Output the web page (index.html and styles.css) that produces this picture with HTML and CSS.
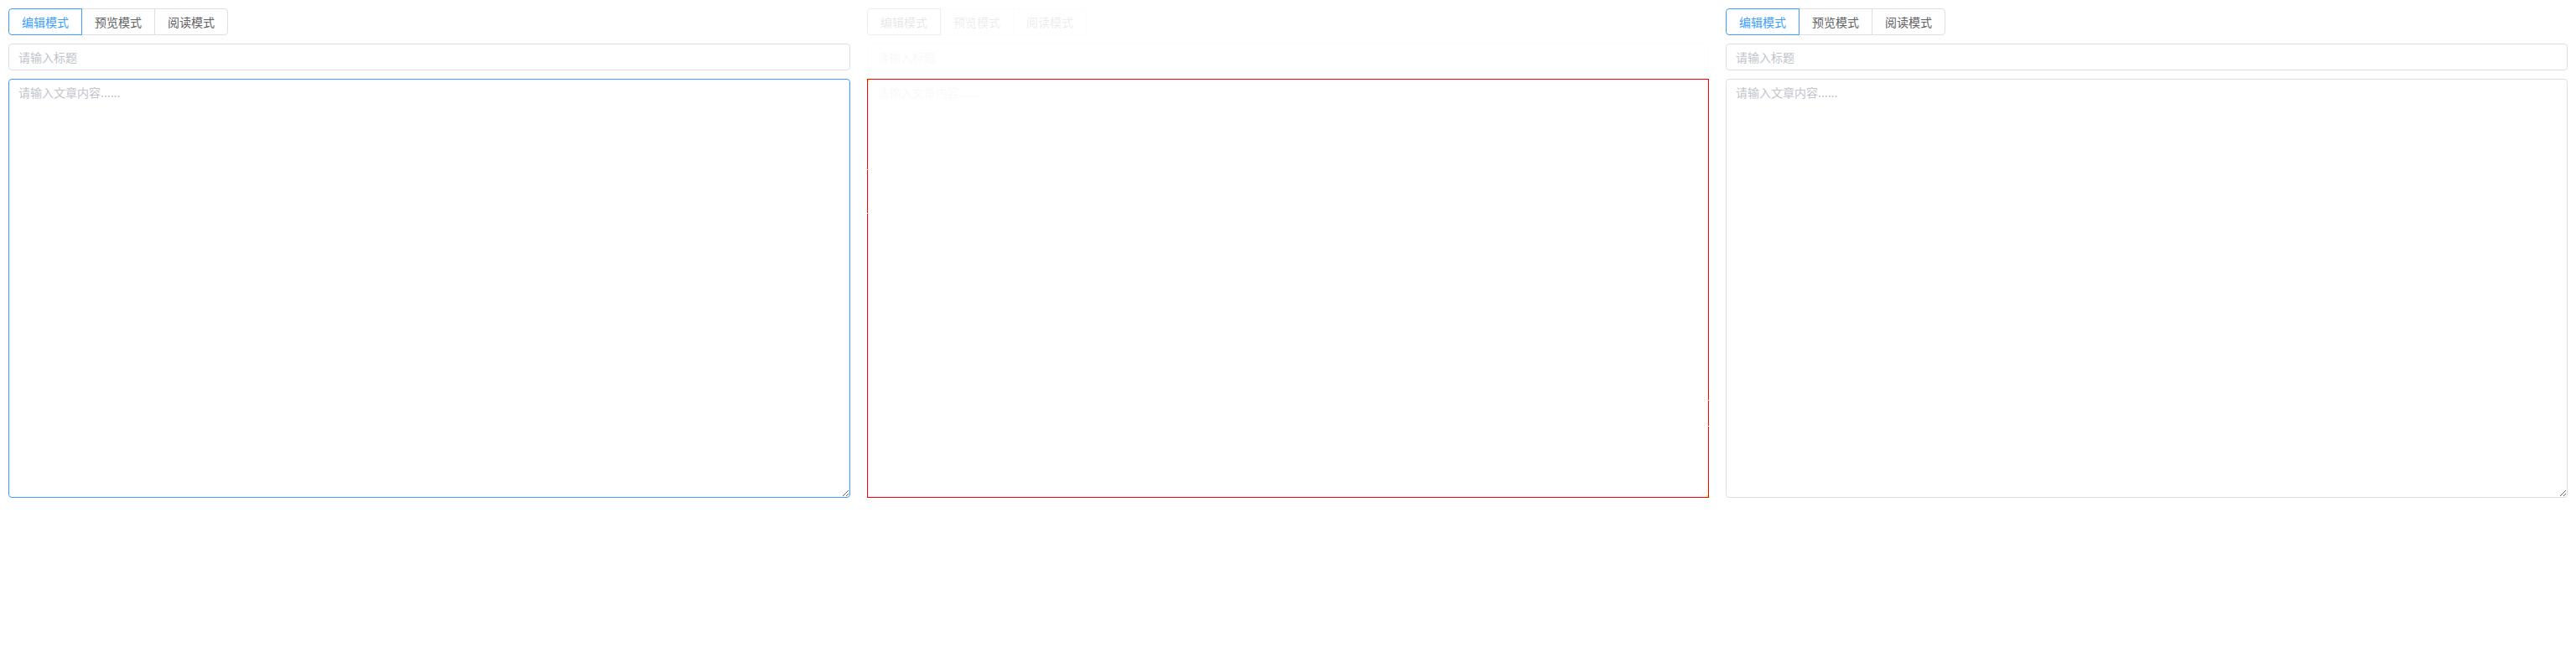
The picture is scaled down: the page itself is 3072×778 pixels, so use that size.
FILE: index.html
```html
<!DOCTYPE html>
<html lang="zh">
<head>
<meta charset="utf-8">
<title>编辑器</title>
<link rel="stylesheet" href="styles.css">
</head>
<body>
<div class="page">
  <section class="panel">
    <div class="modes">
      <button class="mode active">编辑模式</button>
      <button class="mode">预览模式</button>
      <button class="mode">阅读模式</button>
    </div>
    <input class="title" type="text" placeholder="请输入标题">
    <textarea class="content focused" placeholder="请输入文章内容......"></textarea>
  </section>

  <section class="panel inspected">
    <div class="faded">
      <div class="modes">
        <button class="mode plain">编辑模式</button>
        <button class="mode">预览模式</button>
        <button class="mode">阅读模式</button>
      </div>
      <input class="title" type="text" placeholder="请输入标题">
      <textarea class="content" placeholder="请输入文章内容......"></textarea>
    </div>
    <div class="highlight">
      <span class="dot tl"></span>
      <span class="dot l1"></span>
      <span class="dot l2"></span>
      <span class="dot r1"></span>
      <span class="dot r2"></span>
      <span class="dot br"></span>
    </div>
  </section>

  <section class="panel">
    <div class="modes">
      <button class="mode active">编辑模式</button>
      <button class="mode">预览模式</button>
      <button class="mode">阅读模式</button>
    </div>
    <input class="title" type="text" placeholder="请输入标题">
    <textarea class="content" placeholder="请输入文章内容......"></textarea>
  </section>
</div>
</body>
</html>
```
FILE: styles.css
```css
* { box-sizing: border-box; }
html, body { margin: 0; padding: 0; background: #fff; }
body {
  font-family: "Noto Sans CJK SC", "Noto Sans", "Liberation Sans", sans-serif;
  font-size: 14px;
  color: #606266;
}
.page {
  display: grid;
  grid-template-columns: repeat(3, 1fr);
  gap: 20px;
  padding: 10px;
}
.panel, .faded {
  display: flex;
  flex-direction: column;
  gap: 10px;
}
.panel.inspected { position: relative; }
.faded { opacity: 0.12; }
.modes { display: flex; }
.mode {
  height: 32px;
  padding: 0 15px;
  font: inherit;
  font-size: 14px;
  line-height: 30px;
  color: #606266;
  background: #fff;
  border: 1px solid #dcdfe6;
  margin-left: -1px;
  border-radius: 0;
  position: relative;
  cursor: pointer;
}
.mode:first-child { margin-left: 0; border-radius: 4px 0 0 4px; }
.mode:last-child { border-radius: 0 4px 4px 0; }
.mode.active { color: #409eff; border-color: #409eff; z-index: 1; }
.mode.plain { color: #303133; border-color: #606266; z-index: 1; }
.title {
  height: 32px;
  padding: 0 11px;
  font: inherit;
  color: #606266;
  border: 1px solid #dcdfe6;
  border-radius: 4px;
  outline: none;
  background: #fff;
}
.content {
  height: 500px;
  padding: 5px 11px;
  font: inherit;
  line-height: 1.5;
  color: #606266;
  border: 1px solid #dcdfe6;
  border-radius: 4px;
  outline: none;
  background: #fff;
  resize: both;
}
.content.focused { border-color: #409eff; }
.title::placeholder, .content::placeholder { color: #c0c4cc; }
.highlight {
  position: absolute;
  left: 0;
  top: 84px;
  width: 100%;
  height: 500px;
  border: 1px solid #ff0000;
  pointer-events: none;
}
.dot {
  position: absolute;
  width: 2px;
  height: 2px;
  background: #ffff00;
}
.dot.tl { left: 0; top: 0; }
.dot.br { right: 0; bottom: 0; }
.dot.l1 { left: -1px; top: 107px; width: 1px; height: 1px; }
.dot.l2 { left: -1px; top: 159px; width: 1px; height: 1px; }
.dot.r1 { right: -1px; top: 382px; width: 1px; height: 1px; }
.dot.r2 { right: -1px; top: 413px; width: 1px; height: 1px; }
```
